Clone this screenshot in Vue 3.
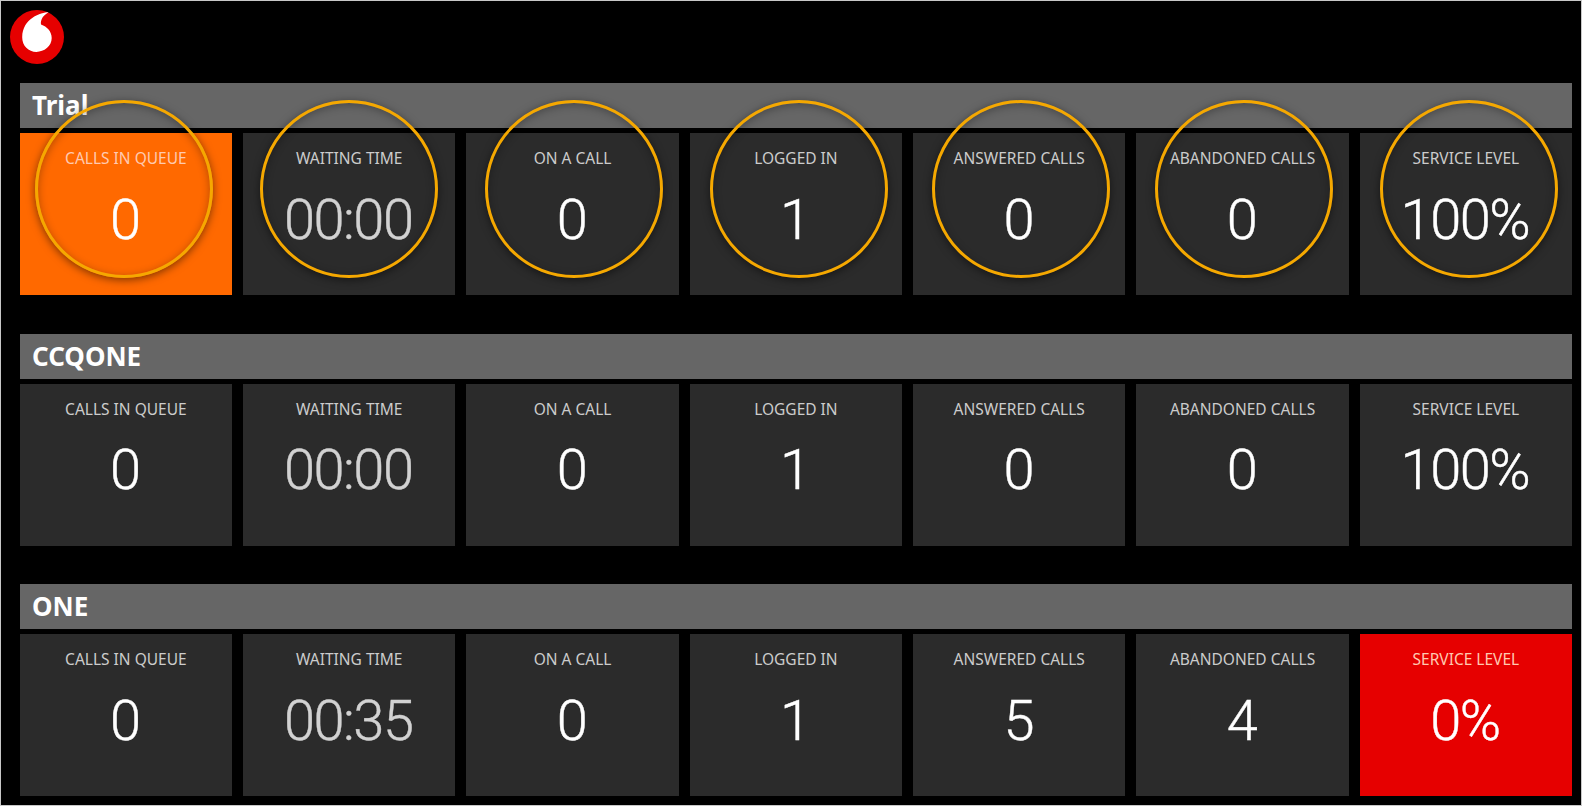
<template>
  <div class="board">
    <div class="top">
      <svg class="logo" viewBox="0 0 54 54" width="54" height="54">
        <circle cx="27" cy="27" r="27" fill="#e60000" />
        <path
          d="M38.5 2.2C31 2.2 12.4 8.2 12.2 27.2C12.1 35.8 18.6 41.9 26.4 41.9C34 41.9 41.7 36.6 41.7 28.1C41.7 21.5 37 16.6 31 14.6C30.2 9.4 33.5 5.2 38.5 2.2Z"
          fill="#fff"
        />
      </svg>
    </div>

    <section v-for="queue in queues" :key="queue.name" class="queue">
      <div class="queueName">{{ queue.name }}</div>
      <div class="stats">
        <div
          v-for="stat in queue.stats"
          :key="stat.label"
          class="stat"
          :class="stat.state"
        >
          <div class="label">{{ stat.label }}</div>
          <div class="value" :class="{ time: stat.label === 'WAITING TIME' }">{{ stat.value }}</div>
          <div
            v-if="queue.highlight"
            class="ring"
            :style="{ marginLeft: stat.ringShift + 'px' }"
          ></div>
        </div>
      </div>
    </section>
  </div>
</template>

<script setup>
const labels = [
  'CALLS IN QUEUE',
  'WAITING TIME',
  'ON A CALL',
  'LOGGED IN',
  'ANSWERED CALLS',
  'ABANDONED CALLS',
  'SERVICE LEVEL',
];
const ringShifts = [-2, 0, 1.3, 3.3, 1.3, 1.3, 3.3];

const makeStats = (values, states = {}) =>
  values.map((value, i) => ({
    label: labels[i],
    value,
    state: states[i] || '',
    ringShift: ringShifts[i],
  }));

const queues = [
  {
    name: 'Trial',
    highlight: true,
    stats: makeStats(['0', '00:00', '0', '1', '0', '0', '100%'], { 0: 'warn' }),
  },
  {
    name: 'CCQONE',
    stats: makeStats(['0', '00:00', '0', '1', '0', '0', '100%']),
  },
  {
    name: 'ONE',
    stats: makeStats(['0', '00:35', '0', '1', '5', '4', '0%'], { 6: 'alert' }),
  },
];
</script>

<style>
html,
body {
  margin: 0;
  background: #000;
}
</style>

<style scoped>
.board {
  box-sizing: border-box;
  width: 1582px;
  height: 806px;
  padding: 9px 8.92px 0 18.7px;
  background: #000;
  border: 1px solid #c8c8c8;
  overflow: hidden;
  font-family: "Noto Sans", "Open Sans", sans-serif;
  color: #fff;
}

.top {
  height: 73px;
  margin-left: -9.7px;
}

.logo {
  display: block;
}

.queue {
  margin-bottom: 38.7px;
}

.queueName {
  height: 45px;
  padding-left: 12.3px;
  background: #666;
  font-size: 26px;
  font-weight: 700;
  line-height: 44px;
}

.stats {
  display: grid;
  grid-template-columns: repeat(7, 1fr);
  column-gap: 10.93px;
  margin-top: 5px;
}

.stat {
  position: relative;
  height: 162px;
  background: #2b2b2b;
  text-align: center;
}

.stat.warn {
  background: #ff6900;
}

.stat.alert {
  background: #e60000;
}

.label {
  padding-top: 15px;
  font-size: 15.5px;
  line-height: 20px;
  color: #ccc;
}

.warn .label,
.alert .label {
  color: #ffc9b0;
}

.value {
  margin-top: 15.5px;
  padding-right: 2px;
  font-family: Roboto, "Open Sans", sans-serif;
  font-size: 56px;
  font-weight: 300;
  letter-spacing: -1.5px;
  line-height: 72px;
  -webkit-text-stroke: 0.4px currentColor;
}

.value.time {
  color: #d2d2d2;
}

.ring {
  position: absolute;
  top: -33px;
  left: 50%;
  box-sizing: border-box;
  width: 178px;
  height: 178px;
  transform: translateX(-50%);
  border: 3px solid #f5a800;
  border-radius: 50%;
  box-shadow: 0 2px 8px rgba(0, 0, 0, 0.5), inset 0 2px 8px rgba(0, 0, 0, 0.3);
}
</style>
